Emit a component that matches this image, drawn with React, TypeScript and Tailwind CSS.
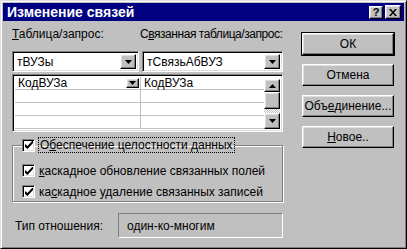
import React from 'react';

const font = "font-['Liberation_Sans',Arial,sans-serif]";
const raised =
  'bg-[#c0c0c0] border border-t-white border-l-white border-r-black border-b-black shadow-[inset_-1px_-1px_0_#808080,inset_1px_1px_0_#dfdfdf]';
const sunken =
  'border border-t-[#808080] border-l-[#808080] border-r-white border-b-white shadow-[inset_1px_1px_0_#000,inset_-1px_-1px_0_#dfdfdf]';

const Arrow = ({ up = false }: { up?: boolean }) => (
  <svg width="7" height="4" viewBox="0 0 7 4" className={up ? 'rotate-180' : ''}>
    <path d="M0 0h7L3.5 4z" fill="#000" />
  </svg>
);

const Check = () => (
  <div className={`w-[13px] h-[13px] bg-white flex items-center justify-center shrink-0 ${sunken}`}>
    <svg width="8" height="8" viewBox="0 0 8 8">
      <path d="M0 3v3l2.5 2L8 2V-1L2.5 5z" fill="#000" />
    </svg>
  </div>
);

const Combo = ({ value, width }: { value: string; width: string }) => (
  <div className={`h-[21px] ${width} bg-white flex items-center p-[2px] ${sunken}`}>
    <span className="flex-1 pl-[2px] text-[12px] leading-none">{value}</span>
    <div className={`w-[16px] h-full flex items-center justify-center ${raised}`}>
      <Arrow />
    </div>
  </div>
);

const Button = ({ children, isDefault = false }: { children: React.ReactNode; isDefault?: boolean }) => (
  <div
    className={`h-[22px] w-[92px] flex items-center justify-center text-[12px] ${
      isDefault ? 'outline outline-1 outline-black' : ''
    } ${raised}`}
  >
    {children}
  </div>
);

export default function App() {
  const rows = [0, 1, 2, 3];
  return (
    <div className={`${font} w-[407px] h-[249px] bg-[#c0c0c0] text-black border border-t-[#dfdfdf] border-l-[#dfdfdf] border-r-black border-b-black shadow-[inset_1px_1px_0_#fff,inset_-1px_-1px_0_#808080] p-[2px] flex flex-col`}>
      {/* title bar */}
      <div className="h-[18px] bg-[#000080] flex items-center pl-[4px] pr-[3px]">
        <span className="flex-1 text-white font-bold text-[14px] leading-none">Изменение связей</span>
        <div className={`w-[14px] h-[13px] flex items-center justify-center text-[11px] font-bold leading-none ${raised}`}>?</div>
        <div className={`ml-[2px] w-[16px] h-[14px] flex items-center justify-center ${raised}`}>
          <svg width="8" height="7" viewBox="0 0 8 7">
            <path d="M0 0h2l2 2.5L6 0h2L5 3.5 8 7H6L4 4.5 2 7H0l3-3.5z" fill="#000" />
          </svg>
        </div>
      </div>

      <div className="flex flex-1">
        {/* left column */}
        <div className="ml-[9px] w-[271px] flex flex-col">
          <div className="flex mt-[6px] text-[12px] leading-[14px] whitespace-nowrap">
            <span className="w-[128px] shrink-0"><u>Т</u>аблица/запрос:</span>
            <span className="tracking-[-0.45px]">С<u>в</u>язанная таблица/запрос:</span>
          </div>
          <div className="flex gap-[3px] mt-[10px]">
            <Combo value="тВУЗы" width="w-[127px]" />
            <Combo value="тСвязьАбВУЗ" width="w-[141px]" />
          </div>

          {/* field grid */}
          <div className={`mt-[2px] h-[58px] bg-white flex p-[2px] ${sunken}`}>
            <div className="flex-1 flex flex-col">
              {rows.map((r) => (
                <div key={r} className="h-[14px] flex border-b border-[#c0c0c0] text-[12px] leading-none">
                  <div className="w-[126px] border-r border-[#c0c0c0] flex items-center pl-[3px]">
                    {r === 0 && (
                      <>
                        <span className="flex-1">КодВУЗа</span>
                        <div className={`w-[13px] h-[10px] mr-[1px] flex items-center justify-center ${raised}`}>
                          <Arrow />
                        </div>
                      </>
                    )}
                  </div>
                  <div className="flex-1 flex items-center pl-[3px]">{r === 0 ? 'КодВУЗа' : ''}</div>
                </div>
              ))}
            </div>
            <div className="w-[16px] flex flex-col pt-[2px]">
              <div className={`h-[13px] flex items-center justify-center ${raised}`}>
                <Arrow up />
              </div>
              <div className={`h-[17px] ${raised}`} />
              <div className="flex-1 bg-[image:repeating-conic-gradient(#fff_0_25%,#c0c0c0_0_50%)] bg-[length:2px_2px]" />
              <div className={`h-[16px] flex items-center justify-center ${raised}`}>
                <Arrow />
              </div>
            </div>
          </div>

          {/* integrity group */}
          <fieldset className="mt-[5px] h-[65px] border border-[#808080] shadow-[1px_1px_0_#fff,inset_1px_1px_0_#fff] pl-[9px]">
            <legend className="flex items-center text-[12px] leading-none">
              <Check />
              <span className="ml-[3px] px-[1px] py-[1px] border border-dotted border-black">
                О<u>б</u>еспечение целостности данных
              </span>
            </legend>
            <div className="flex items-center mt-[11px] text-[12px] leading-none">
              <Check />
              <span className="ml-[4px]"><u>к</u>аскадное обновление связанных полей</span>
            </div>
            <div className="flex items-center mt-[8px] text-[12px] leading-none">
              <Check />
              <span className="ml-[4px]">ка<u>с</u>кадное удаление связанных записей</span>
            </div>
          </fieldset>

          {/* relation type */}
          <div className="flex items-center mt-[11px] text-[12px] leading-none">
            <span className="w-[106px] pl-[3px]">Тип отношения:</span>
            <div className="h-[25px] flex-1 flex items-center pl-[8px] border border-t-[#808080] border-l-[#808080] border-r-white border-b-white">
              один-ко-многим
            </div>
          </div>
        </div>

        {/* buttons */}
        <div className="ml-[19px] flex flex-col gap-[9px] pt-[12px]">
          <Button isDefault>ОК</Button>
          <Button>Отмена</Button>
          <Button>Объ<u>е</u>динение...</Button>
          <Button><u>Н</u>овое..</Button>
        </div>
      </div>
    </div>
  );
}
